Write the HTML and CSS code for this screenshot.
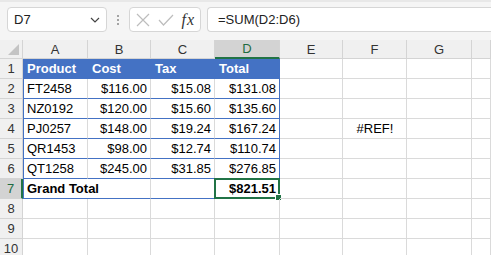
FILE: index.html
```html
<!DOCTYPE html>
<html lang="en">
<head>
    <meta charset="UTF-8">
    <title>Sheet</title>
    <link rel="stylesheet" href="styles.css">
</head>
<body>
    <div class="formula-bar">
        <div class="name-box">
            <span>D7</span>
            <svg class="chevron" width="10" height="6" viewBox="0 0 10 6"><path d="M1 1 L5 5 L9 1" fill="none" stroke="#444" stroke-width="1.2"/></svg>
        </div>
        <div class="dots"><i></i><i></i><i></i></div>
        <div class="fx-box">
            <svg width="14" height="14" viewBox="0 0 14 14"><path d="M1 1 L13 13 M13 1 L1 13" stroke="#bdbdbd" stroke-width="1.2"/></svg>
            <svg width="16" height="12" viewBox="0 0 16 12"><path d="M1 6 L5.5 11 L15 1" fill="none" stroke="#bdbdbd" stroke-width="1.2"/></svg>
            <span class="fx">fx</span>
        </div>
        <div class="formula-input">=SUM(D2:D6)</div>
    </div>

    <div class="sheet">
        <div class="corner"></div>
        <div class="col-head">A</div>
        <div class="col-head">B</div>
        <div class="col-head">C</div>
        <div class="col-head active">D</div>
        <div class="col-head">E</div>
        <div class="col-head">F</div>
        <div class="col-head">G</div>
        <div class="col-head last"></div>

        <div class="row-head">1</div>
        <div class="cell th">Product</div>
        <div class="cell th">Cost</div>
        <div class="cell th">Tax</div>
        <div class="cell th">Total</div>
        <div class="cell"></div><div class="cell"></div><div class="cell"></div><div class="cell"></div>

        <div class="row-head">2</div>
        <div class="cell td first">FT2458</div>
        <div class="cell td num">$116.00</div>
        <div class="cell td num">$15.08</div>
        <div class="cell td num end">$131.08</div>
        <div class="cell"></div><div class="cell"></div><div class="cell"></div><div class="cell"></div>

        <div class="row-head">3</div>
        <div class="cell td first">NZ0192</div>
        <div class="cell td num">$120.00</div>
        <div class="cell td num">$15.60</div>
        <div class="cell td num end">$135.60</div>
        <div class="cell"></div><div class="cell"></div><div class="cell"></div><div class="cell"></div>

        <div class="row-head">4</div>
        <div class="cell td first">PJ0257</div>
        <div class="cell td num">$148.00</div>
        <div class="cell td num">$19.24</div>
        <div class="cell td num end">$167.24</div>
        <div class="cell"></div>
        <div class="cell center">#REF!</div>
        <div class="cell"></div><div class="cell"></div>

        <div class="row-head">5</div>
        <div class="cell td first">QR1453</div>
        <div class="cell td num">$98.00</div>
        <div class="cell td num">$12.74</div>
        <div class="cell td num end">$110.74</div>
        <div class="cell"></div><div class="cell"></div><div class="cell"></div><div class="cell"></div>

        <div class="row-head">6</div>
        <div class="cell td first">QT1258</div>
        <div class="cell td num">$245.00</div>
        <div class="cell td num">$31.85</div>
        <div class="cell td num end">$276.85</div>
        <div class="cell"></div><div class="cell"></div><div class="cell"></div><div class="cell"></div>

        <div class="row-head active">7</div>
        <div class="cell td first bold span2">Grand Total</div>
        <div class="cell td"></div>
        <div class="cell td num end bold selected">$821.51<span class="handle"></span></div>
        <div class="cell"></div><div class="cell"></div><div class="cell"></div><div class="cell"></div>

        <div class="row-head">8</div>
        <div class="cell"></div><div class="cell"></div><div class="cell"></div><div class="cell"></div>
        <div class="cell"></div><div class="cell"></div><div class="cell"></div><div class="cell"></div>

        <div class="row-head">9</div>
        <div class="cell"></div><div class="cell"></div><div class="cell"></div><div class="cell"></div>
        <div class="cell"></div><div class="cell"></div><div class="cell"></div><div class="cell"></div>

        <div class="row-head">10</div>
        <div class="cell"></div><div class="cell"></div><div class="cell"></div><div class="cell"></div>
        <div class="cell"></div><div class="cell"></div><div class="cell"></div><div class="cell"></div>
    </div>
</body>
</html>
```

FILE: styles.css
```css
body {
    margin: 0;
    font-family: "Liberation Sans", Arial, sans-serif;
    font-size: 13px;
    color: #000;
    background: #fff;
    overflow: hidden;
    width: 491px;
    height: 255px;
}
.formula-bar {
    display: flex;
    align-items: flex-start;
    height: 40px;
    box-sizing: border-box;
    padding: 7px 0 0 7px;
    background: #f5f5f5;
    border-top: 2px solid #e8e8e8;
}
.name-box, .fx-box, .formula-input {
    height: 25px;
    box-sizing: border-box;
    background: #fff;
    border: 1px solid #d6d6d6;
    border-radius: 4px;
    display: flex;
    align-items: center;
}
.formula-bar > div { margin-top: -2px; }
.name-box {
    width: 100px;
    padding: 0 6px 0 6px;
    justify-content: space-between;
    color: #222;
}
.dots {
    width: 22px;
    height: 25px;
    display: flex;
    flex-direction: column;
    align-items: center;
    justify-content: center;
    gap: 2px;
}
.dots i {
    width: 2px;
    height: 2px;
    background: #888;
    border-radius: 1px;
}
.fx-box {
    width: 72px;
    padding: 0 5px 0 6px;
    justify-content: space-between;
}
.fx {
    font-family: "Liberation Serif", "Times New Roman", serif;
    font-style: italic;
    font-size: 16px;
    color: #333;
    letter-spacing: 1px;
}
.formula-input {
    flex: 1;
    margin-left: 6px;
    padding-left: 10px;
    border-right: none;
    border-radius: 4px 0 0 4px;
    color: #222;
}
.sheet {
    display: grid;
    grid-template-columns: 23px 65px 63px 64px 65px 63px 64px 65px 1fr;
    grid-template-rows: 19px repeat(10, 20px);
    background: #fff;
}
.corner, .col-head, .row-head {
    background: #f0f0f0;
    color: #333;
    box-sizing: border-box;
    display: flex;
    align-items: center;
    justify-content: center;
}
.corner {
    border-right: 1px solid #d4d4d4;
    border-bottom: 1px solid #d4d4d4;
    position: relative;
}
.corner::after {
    content: "";
    position: absolute;
    right: 3px;
    bottom: 3px;
    border-left: 11px solid transparent;
    border-bottom: 11px solid #c4c4c4;
}
.col-head {
    border-right: 1px solid #d4d4d4;
    border-bottom: 1px solid #d4d4d4;
}
.col-head.active {
    background: #d3d3d3;
    color: #1e6b41;
    border-bottom: 2px solid #217346;
}
.row-head {
    border-right: 1px solid #d4d4d4;
    border-bottom: 1px solid #d4d4d4;
}
.row-head.active {
    background: #d3d3d3;
    color: #1e6b41;
    border-right: 2px solid #217346;
}
.cell {
    box-sizing: border-box;
    border-right: 1px solid #dadada;
    border-bottom: 1px solid #dadada;
    padding: 0 3px 0 4px;
    display: flex;
    align-items: center;
    white-space: nowrap;
    position: relative;
}
.th {
    background: #4472c4;
    color: #fff;
    font-weight: bold;
    border-right-color: #4472c4;
    border-bottom-color: #4472c4;
}
.td {
    border-bottom-color: #4472c4;
}
.first {
    box-shadow: inset 1px 0 0 #4472c4;
}
.num {
    justify-content: flex-end;
}
.end {
    border-right-color: #4472c4;
}
.center {
    justify-content: center;
}
.bold {
    font-weight: bold;
}
.span2 {
    grid-column: span 2;
}
.selected {
    border: 2px solid #217346;
    margin: -1px 0 0 -1px;
    padding-right: 2px;
}
.handle {
    position: absolute;
    right: -4px;
    bottom: -4px;
    width: 5px;
    height: 5px;
    background: #217346;
    border: 1px solid #fff;
}
```
